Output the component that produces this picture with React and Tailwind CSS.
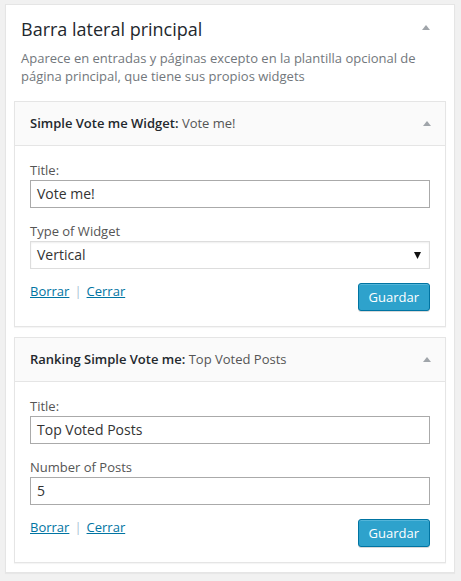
import React from "react";

const Tri = ({ className = "" }) => (
  <svg width="8" height="5" viewBox="0 0 8 5" className={className}>
    <polygon points="4,0 8,5 0,5" fill="#a0a5aa" />
  </svg>
);

const Label = ({ children, first }) => (
  <div className={`text-[13px] leading-[18px] text-[#555] ${first ? "" : "mt-[14px]"}`}>{children}</div>
);

const Input = ({ value }) => (
  <div className="mt-[1px] h-[28px] w-full border border-[#aaa] bg-white pl-[6px] text-[14px] leading-[26px] text-[#333]">
    {value}
  </div>
);

const Select = ({ value }) => (
  <div className="mt-[1px] flex h-[28px] w-full items-center justify-between border border-[#ddd] bg-white pl-[6px] pr-[8px] text-[14px] leading-[26px] text-[#333] shadow-[inset_0_1px_2px_rgba(0,0,0,0.07)]">
    <span>{value}</span>
    <svg width="7" height="7" viewBox="0 0 7 7">
      <polygon points="0,0 7,0 3.5,7" fill="#111" />
    </svg>
  </div>
);

const Actions = () => (
  <div className="mt-[13px] flex items-start justify-between">
    <div className="text-[13px] leading-[18px]">
      <a className="text-[#0074a2] underline">Borrar</a>
      <span className="mx-[5px] text-[#a8c4d4]">|</span>
      <a className="text-[#0074a2] underline">Cerrar</a>
    </div>
    <button className="mt-[1px] h-[28px] rounded-[3px] border border-[#0074a2] bg-[#2ea2cc] px-[10px] text-[13px] leading-[26px] text-white shadow-[inset_0_1px_0_rgba(120,200,230,0.5),0_1px_0_rgba(0,0,0,0.15)]">
      Guardar
    </button>
  </div>
);

const Widget = ({ name, title, children, className = "" }) => (
  <div className={`border border-[#e5e5e5] bg-white shadow-[0_1px_1px_rgba(0,0,0,0.04)] ${className}`}>
    <div className="flex h-[44px] items-center justify-between border-b border-[#e5e5e5] bg-[#fafafa] pl-[15px] pr-[14px]">
      <div className="text-[13px] text-[#23282d]">
        <span className="font-semibold">{name}:</span>{" "}
        <span className="text-[#555]">{title}</span>
      </div>
      <Tri />
    </div>
    <div className="px-[15px] pb-[15px] pt-[15px]">{children}</div>
  </div>
);

export default function App() {
  return (
    <div
      className="min-h-[581px] bg-[#f1f1f1] pl-[5px] pt-[4px]"
      style={{ fontFamily: '"Open Sans", "Noto Sans", sans-serif' }}
    >
      <div className="w-[450px] border border-[#e5e5e5] bg-white pb-[9px] pt-[12px] shadow-[0_1px_1px_rgba(0,0,0,0.04)]">
        <div className="px-[15px]">
          <div className="flex items-start justify-between">
            <h3 className="text-[18px] leading-[24px] text-[#23282d]">Barra lateral principal</h3>
            <Tri className="mr-[9px] mt-[8px]" />
          </div>
          <p className="mt-[8px] text-[13px] leading-[18px] text-[#72777c]">
            Aparece en entradas y páginas excepto en la plantilla opcional de página principal, que tiene sus propios widgets
          </p>
        </div>
        <div className="mt-[16px] px-[8px]">
          <Widget name="Simple Vote me Widget" title="Vote me!">
            <Label first>Title:</Label>
            <Input value="Vote me!" />
            <Label>Type of Widget</Label>
            <Select value="Vertical" />
            <Actions />
          </Widget>
          <Widget name="Ranking Simple Vote me" title="Top Voted Posts" className="mt-[10px]">
            <Label first>Title:</Label>
            <Input value="Top Voted Posts" />
            <Label>Number of Posts</Label>
            <Input value="5" />
            <Actions />
          </Widget>
        </div>
      </div>
    </div>
  );
}
